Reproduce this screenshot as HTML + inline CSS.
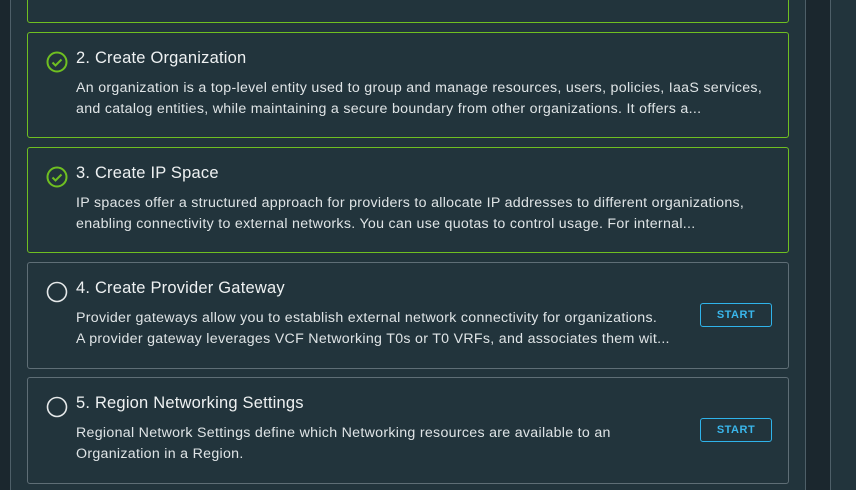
<html><head><style>
body{margin:0;width:856px;height:490px;background:#22343c;position:relative;overflow:hidden;font-family:"Liberation Sans",sans-serif;}
.ls{position:absolute;left:0;top:0;width:10px;height:490px;background:#1b272e;border-right:1px solid #4e5f68}
.rs{position:absolute;left:805px;top:0;width:24px;height:490px;background:#1b272e;border-left:1px solid #4e5f68;border-right:1px solid #4e5f68}
.card{position:absolute;left:27px;width:762px;height:106px;border:1px solid #5f6e76;border-radius:3px;background:#22343c;box-sizing:border-box}
.done{border-color:#6fbf21}
.t{position:absolute;left:48px;top:16px;color:#eef1f2;font-size:16.5px;letter-spacing:0.2px}
.d{position:absolute;left:48px;top:45px;color:#dfe4e6;font-size:14.2px;line-height:21px;white-space:nowrap;letter-spacing:0.3px}
.ic{position:absolute;left:18px;top:18px}
.btn{position:absolute;left:672px;top:40px;width:70px;height:22px;border:1px solid #2fb3ea;border-radius:3px;color:#3ab7ec;font-size:11px;font-weight:bold;text-align:center;line-height:22px;letter-spacing:.5px}
</style></head><body>
<div class="ls"></div><div class="rs"></div>
<div class="card done" style="top:-83px"></div>
<div class="card done" style="top:32px"><svg class="ic" width="22" height="22"><circle cx="11" cy="11" r="9.5" fill="none" stroke="#6fbf21" stroke-width="2"/><path d="M6.5 11.5l3 3 6-6" fill="none" stroke="#6fbf21" stroke-width="2"/></svg><div class="t">2. Create Organization</div><div class="d">An organization is a top-level entity used to group and manage resources, users, policies, IaaS services,<br>and catalog entities, while maintaining a secure boundary from other organizations. It offers a...</div></div>
<div class="card done" style="top:147px"><svg class="ic" width="22" height="22"><circle cx="11" cy="11" r="9.5" fill="none" stroke="#6fbf21" stroke-width="2"/><path d="M6.5 11.5l3 3 6-6" fill="none" stroke="#6fbf21" stroke-width="2"/></svg><div class="t">3. Create IP Space</div><div class="d">IP spaces offer a structured approach for providers to allocate IP addresses to different organizations,<br>enabling connectivity to external networks. You can use quotas to control usage. For internal...</div></div>
<div class="card" style="top:262px;height:107px"><svg class="ic" width="22" height="22"><circle cx="11" cy="11" r="9.5" fill="none" stroke="#e6e9ea" stroke-width="1.6"/></svg><div class="t">4. Create Provider Gateway</div><div class="d">Provider gateways allow you to establish external network connectivity for organizations.<br>A provider gateway leverages VCF Networking T0s or T0 VRFs, and associates them wit...</div><div class="btn">START</div></div>
<div class="card" style="top:377px;height:107px"><svg class="ic" width="22" height="22"><circle cx="11" cy="11" r="9.5" fill="none" stroke="#e6e9ea" stroke-width="1.6"/></svg><div class="t">5. Region Networking Settings</div><div class="d">Regional Network Settings define which Networking resources are available to an<br>Organization in a Region.</div><div class="btn">START</div></div>
</body></html>
